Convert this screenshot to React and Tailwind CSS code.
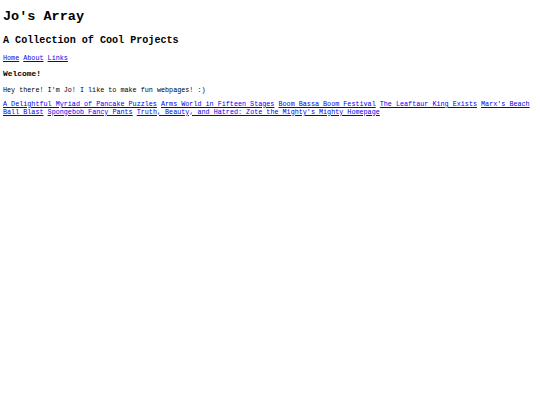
import React from 'react';

const projects = [
  'A Delightful Myriad of Pancake Puzzles',
  'Arms World in Fifteen Stages',
  'Boom Bassa Boom Festival',
  'The Leaftaur King Exists',
  "Marx's Beach Ball Blast",
  'Spongebob Fancy Pants',
  "Truth, Beauty, and Hatred: Zote the Mighty's Mighty Homepage",
];

const App = () => {
  return (
    <div className="min-h-screen bg-white text-black px-[3px] pt-[9px] font-['Liberation_Mono',monospace] text-[6.75px] leading-[1.15]">
      <h1 className="text-[13.5px] font-bold">Jo's Array</h1>
      <h2 className="text-[10.1px] font-bold mt-[10px]">A Collection of Cool Projects</h2>
      <div className="mt-[9px]">
        <a href="#" className="text-[#0000ee] underline">Home</a>{' '}
        <a href="#" className="text-[#0000ee] underline">About</a>{' '}
        <a href="#" className="text-[#0000ee] underline">Links</a>
      </div>
      <h3 className="text-[7.9px] font-bold mt-[6px]">Welcome!</h3>
      <p className="mt-[9px]">Hey there! I'm Jo! I like to make fun webpages! :)</p>
      <div className="mt-[5px] leading-[8px]">
        {projects.map((title, i) => (
          <React.Fragment key={title}>
            <a href="#" className="text-[#0000ee] underline">{title}</a>
            {i < projects.length - 1 ? ' ' : ''}
          </React.Fragment>
        ))}
      </div>
    </div>
  );
};

export default App;
